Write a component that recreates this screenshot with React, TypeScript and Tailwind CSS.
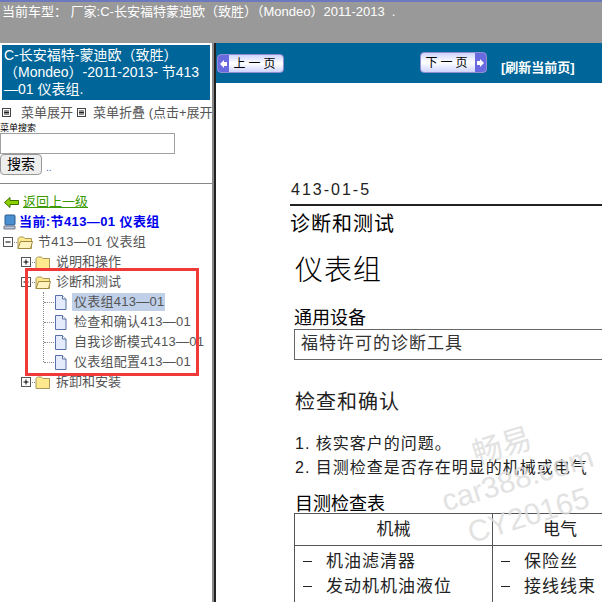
import React from "react";

const cjk = "font-['Liberation_Sans','Noto_Sans_CJK_SC',sans-serif]";

const Expander = ({ open }: { open?: boolean }) => (
  <svg width="11" height="11" viewBox="0 0 11 11" className="shrink-0">
    <rect x="0.5" y="0.5" width="9" height="9" fill="#fff" stroke="#555" />
    <path d={open ? "M2.5 5h5" : "M2.5 5h5M5 2.5v5"} stroke="#000" />
  </svg>
);

const Folder = ({ open }: { open?: boolean }) => (
  <svg width="16" height="15" viewBox="0 0 16 15" className="shrink-0">
    <path d="M1 3.500 2.500 2h4L8 3.500h6.500V13.500H1z" fill="#ffe98f" stroke="#a89858" />
    {open && <path d="M1 13.500 3.500 6.500H15.500L13.500 13.500z" fill="#fff4c0" stroke="#a08a40" />}
  </svg>
);

const Doc = () => (
  <svg width="13" height="15" viewBox="0 0 13 15" className="shrink-0">
    <path d="M1.500.5h7l3.500 3.500v10.500h-10.500z" fill="#e4ecfb" stroke="#5a6fa8" />
    <path d="M8.500.5v3.500h3.500" fill="#fff" stroke="#5a6fa8" />
  </svg>
);

const MenuIcon = () => (
  <svg width="9" height="9" viewBox="0 0 9 9" className="shrink-0">
    <rect x="0.5" y="0.5" width="8" height="8" fill="#fff" stroke="#444" />
    <path d="M2 3h5M2 4.500h5M2 6h5" stroke="#222" />
  </svg>
);

const Dots = ({ w }: { w: number }) => (
  <span className="border-t border-dotted border-[#888] shrink-0" style={{ width: w }} />
);

const leaves = ["仪表组413—01", "检查和确认413—01", "自我诊断模式413—01", "仪表组配置413—01"];

const PageButton = ({ label, next }: { label: string; next?: boolean }) => (
  <div className={`flex ${next ? "flex-row-reverse" : ""} w-[67px] h-full items-stretch rounded-sm border border-[#8f8fd0] bg-gradient-to-b from-[#d0d4ff] via-white to-[#d0d4ff] overflow-hidden`}>
    <span className="w-[11px] bg-[#6a6ae0] flex items-center justify-center">
      <svg width="7" height="8" viewBox="0 0 7 8">
        <path d={next ? "M0 2h3V0l4 4-4 4V6H0z" : "M7 2H4V0L0 4l4 4V6h3z"} fill="#fff" />
      </svg>
    </span>
    <span className="flex-1 flex items-center justify-center text-[12px] text-black tracking-[3px]">{label}</span>
  </div>
);

const TableRow = ({ text }: { text: string }) => (
  <div className="flex h-[25px] items-center">
    <span className="w-[9px] h-px bg-[#222] shrink-0" />
    <span className="ml-[14px] tracking-[1px]">{text}</span>
  </div>
);

export default function App() {
  return (
    <div className={`relative w-[602px] h-[602px] overflow-hidden bg-white ${cjk}`}>
      <div className="h-[43px] bg-[#999999] border-t-2 border-[#6c78c0] text-white text-[13px] leading-[20px] pl-[2px] whitespace-nowrap">
        当前车型： 厂家:C-长安福特蒙迪欧（致胜）（Mondeo）2011-2013 &nbsp;.
      </div>

      <div className="flex h-[559px]">
        <div className="w-[214px] shrink-0 border-r-2 border-[#888] overflow-hidden">
          <div className="ml-[2px] w-[208px] mt-[2px] h-[55px] bg-[#006699] text-white text-[14px] leading-[17px] px-[2px] pt-[2px]">
            C-长安福特-蒙迪欧（致胜）（Mondeo）-2011-2013- 节413—01 仪表组.
          </div>
          <div className="flex items-center h-[15px] mt-[5px] pl-[2px] text-[13px] text-[#555] whitespace-nowrap">
            <MenuIcon />
            <span className="ml-[10px]">菜单展开</span>
            <span className="mx-[4px]"><MenuIcon /></span>
            <span className="ml-[3px]">菜单折叠 (点击+展开</span>
          </div>
          <div className="text-[9px] leading-[10px] mt-[3px] text-black">菜单搜索</div>
          <div className="w-[175px] h-[21px] border border-[#a0a0a0]" />
          <div className="flex items-end">
            <div className="w-[42px] h-[21px] border border-[#999] rounded-sm bg-[#eeeeee] text-[14px] leading-[19px] text-center text-black">搜索</div>
            <span className="text-[10px] text-[#36c] ml-[4px]">..</span>
          </div>
          <div className="border-t border-[#888] mt-[8px]" />

          <div className="relative mt-[8px] text-[13px] leading-[20px] text-[#555] whitespace-nowrap">
            <div className="flex items-center h-[20px] pl-[4px] gap-[4px]">
              <svg width="15" height="11" viewBox="0 0 15 11" className="shrink-0">
                <path d="M.5 5.500 6 .5v3h8.500v4H6v3z" fill="#8fd000" stroke="#3a7000" />
              </svg>
              <span className="text-[#3a9a00] underline">返回上一级</span>
            </div>
            <div className="flex items-center h-[20px] pl-[3px] gap-[3px]">
              <svg width="13" height="16" viewBox="0 0 13 16" className="shrink-0">
                <rect x="2" y="1" width="10" height="10" rx="1" fill="#4a90d0" stroke="#2a5a90" />
                <path d="M1 12h11v3H1z" fill="#b8c4d8" stroke="#778" />
              </svg>
              <span className="text-[#0000ee] font-bold tracking-[0.4px]">当前:节413—01 仪表组</span>
            </div>
            <div className="flex items-center h-[20px] pl-[3px]">
              <Expander open />
              <Dots w={3} />
              <Folder open />
              <span className="ml-[5px] tracking-[0.3px]">节413—01 仪表组</span>
            </div>
            <div className="flex items-center h-[20px] pl-[21px]">
              <Expander />
              <Dots w={3} />
              <Folder />
              <span className="ml-[5px]">说明和操作</span>
            </div>
            <div className="flex items-center h-[20px] pl-[21px]">
              <Expander open />
              <Dots w={3} />
              <Folder open />
              <span className="ml-[5px]">诊断和测试</span>
            </div>
            <div className="ml-[43px] border-l border-dotted border-[#888] h-[70px] flex flex-col">
              {leaves.map((leaf, i) => (
                <div key={leaf} className="flex items-center h-[20px] shrink-0">
                  <Dots w={10} />
                  <Doc />
                  <span className={`ml-[5px] pl-[2px] pr-[1px] leading-[18px] tracking-[0.25px] ${i === 0 ? "bg-[#c0d0e8]" : ""}`}>{leaf}</span>
                </div>
              ))}
            </div>
            <div className="flex items-center h-[20px] mt-[10px] pl-[21px]">
              <Expander />
              <Dots w={3} />
              <Folder />
              <span className="ml-[5px]">拆卸和安装</span>
            </div>
          </div>
        </div>

        <div className="w-[2px] shrink-0 bg-[#222]" />

        <div className="flex-1 min-w-0 overflow-hidden">
          <div className="h-[40px] bg-[#006699] flex pl-[1px] whitespace-nowrap">
            <div className="mt-[11px] h-[19px]"><PageButton label="上一页" /></div>
            <div className="mt-[9px] ml-[136px] h-[21px]"><PageButton label="下一页" next /></div>
            <div className="mt-[17px] ml-[14px] text-white font-bold text-[13px] leading-[15px]">[刷新当前页]</div>
          </div>

          <div className="pl-[74px] text-black whitespace-nowrap">
            <div className="text-[16px] leading-[20px] mt-[97px] ml-[1px] tracking-[2px] text-[#222]">413-01-5</div>
            <div className="border-t-2 border-[#222] mt-[4px]" />
            <div className="text-[20px] leading-[24px] mt-[6px] tracking-[1px]">诊断和测试</div>
            <div className="text-[28px] leading-[36px] mt-[17px] ml-[5px] tracking-[1px] font-light">仪表组</div>
            <div className="text-[18px] leading-[20px] mt-[19px] ml-[4px]">通用设备</div>
            <div className="border border-[#666] border-r-0 h-[31px] mt-[1px] ml-[4px] pl-[6px] text-[17px] leading-[28px] text-[#333] tracking-[1px]">福特许可的诊断工具</div>
            <div className="text-[20px] leading-[26px] mt-[29px] ml-[5px] tracking-[1px] text-[#222]">检查和确认</div>
            <div className="text-[16px] leading-[24px] mt-[17px] ml-[5px] tracking-[1px] text-[#222]">1. 核实客户的问题。</div>
            <div className="text-[16px] leading-[24px] ml-[5px] tracking-[1px] text-[#222]">2. 目测检查是否存在明显的机械或电气</div>
            <div className="text-[18px] leading-[17px] mt-[16px] ml-[5px]">目测检查表</div>
            <div className="grid grid-cols-[198px_1fr] border-t border-l border-[#555] ml-[4px] text-[17px] text-[#222]">
              <div className="h-[32px] border-r border-b border-[#555] text-center leading-[32px]">机械</div>
              <div className="h-[32px] border-b border-[#555] pl-[50px] leading-[32px]">电气</div>
              <div className="border-r border-[#555] pl-[8px] pt-[3px] h-[60px]">
                <TableRow text="机油滤清器" />
                <TableRow text="发动机机油液位" />
              </div>
              <div className="pl-[8px] pt-[3px]">
                <TableRow text="保险丝" />
                <TableRow text="接线线束" />
              </div>
            </div>
          </div>
        </div>
      </div>

      {/* red highlight drawn over the tree */}
      <div className="absolute left-[25px] top-[268px] w-[174px] h-[108px] border-[3px] border-[#f03a3a] pointer-events-none" />

      {/* watermark */}
      <div className="absolute left-[438px] top-[426px] w-[160px] -rotate-[17deg] text-[#dcdcdc] text-[30px] leading-[38px] text-center pointer-events-none whitespace-nowrap opacity-80">
        <div className="text-[30px] leading-[34px] pr-[10px]">畅易</div>
        <div>car388.com</div>
        <div>CY20165</div>
      </div>
    </div>
  );
}
